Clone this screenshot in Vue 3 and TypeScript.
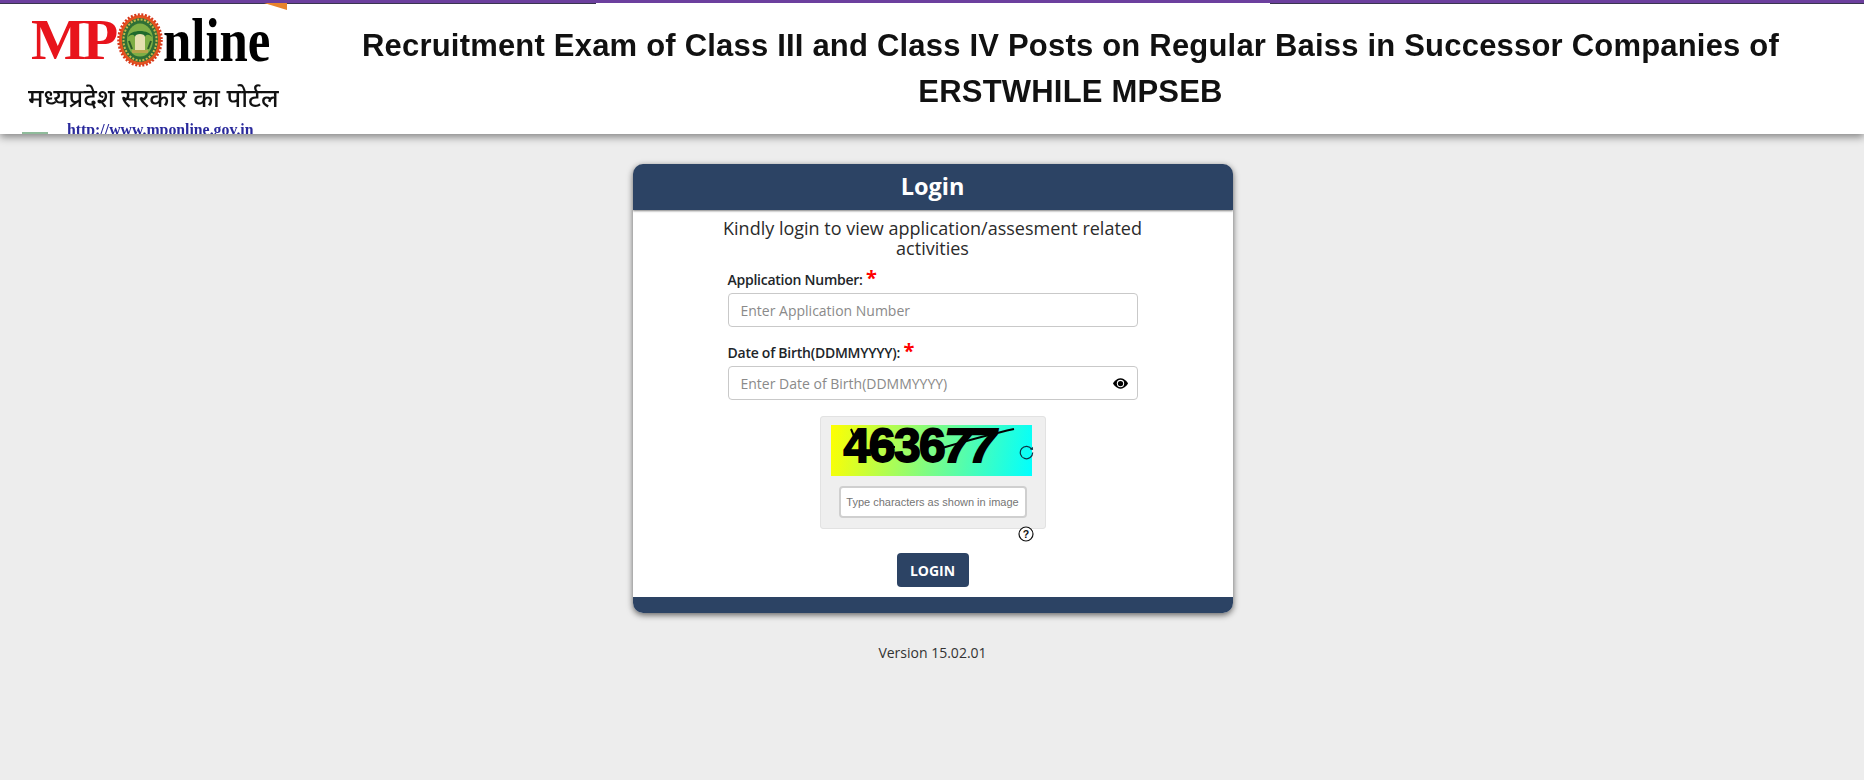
<script setup lang="ts">
const title = 'Recruitment Exam of Class III and Class IV Posts on Regular Baiss in Successor Companies of ERSTWHILE MPSEB'
const version = 'Version 15.02.01'
</script>

<template>
  <div class="page">
    <header class="top">
      <div class="logo">
        <span class="tri"></span>
        <span class="green"></span>
        <div class="brand">
          <span class="mp">MP</span>
          <svg class="emblem" viewBox="0 0 46 54" width="46" height="54">
            <ellipse cx="23" cy="27" rx="21" ry="25" fill="#e2531f" />
            <ellipse cx="23" cy="27" rx="21.5" ry="25.5" fill="none" stroke="#d8381a" stroke-width="2.5" stroke-dasharray="2 1.6" />
            <ellipse cx="23" cy="27" rx="18" ry="22" fill="#2f6f35" />
            <ellipse cx="23" cy="27" rx="16.5" ry="20.5" fill="none" stroke="#c9b64a" stroke-width="2" stroke-dasharray="2 1.5" />
            <ellipse cx="23" cy="27" rx="13" ry="16.5" fill="#7fae45" />
            <path d="M11 24c2-8 22-8 24 0-3-3-6-3-7 0H18c-1-3-4-3-7 0z" fill="#1f6a2c" />
            <path d="M18 24c0-4 10-4 10 0v14H18z" fill="#e6dfb0" />
            <rect x="15" y="37" width="16" height="3" fill="#b9a44a" />
            <path d="M12 28l3 8M34 28l-3 8" stroke="#2a5a28" stroke-width="2" fill="none" />
          </svg>
          <span class="nline">nline</span>
        </div>
        <div class="hindi">मध्यप्रदेश सरकार का पोर्टल</div>
        <div class="url">http://www.mponline.gov.in</div>
      </div>
      <h1 class="title">{{ title }}</h1>
    </header>

    <main class="main">
      <section class="card">
        <div class="card-head">Login</div>
        <div class="card-body">
          <p class="intro">Kindly login to view application/assesment related activities</p>
          <div class="field">
            <label class="label">Application Number: <span class="req">*</span></label>
            <div class="input"><span class="ph">Enter Application Number</span></div>
          </div>
          <div class="field">
            <label class="label">Date of Birth(DDMMYYYY): <span class="req">*</span></label>
            <div class="input">
              <span class="ph">Enter Date of Birth(DDMMYYYY)</span>
              <svg class="eye" viewBox="0 0 16 16" width="15" height="15">
                <path d="M16 8s-3-5.5-8-5.5S0 8 0 8s3 5.5 8 5.5S16 8 16 8z" fill="#000" />
                <circle cx="8" cy="8" r="3.9" fill="#fff" />
                <circle cx="8" cy="8" r="2.8" fill="#000" />
              </svg>
            </div>
          </div>
          <div class="captcha-wrap">
            <div class="captcha">
              <div class="cap-row">
                <div class="cap-img">
                  <span class="cap-text">4636<i class="cap-slant">77</i></span>
                  <svg class="cap-noise" viewBox="0 0 201 51" width="201" height="51">
                    <path d="M20 4l5 12M42 22h22M111 23C135 16 160 9 183 4" stroke="#000" stroke-width="2" fill="none" />
                  </svg>
                </div>
                <svg class="refresh" viewBox="0 0 16 16" width="15" height="15">
                  <path d="M13.6 4.6A6.6 6.6 0 1 0 14.6 8" fill="none" stroke="#0c3344" stroke-width="1.3" />
                  <path d="M11.6 4.6l3.4.6-.3-3.4z" fill="#0c3344" />
                </svg>
              </div>
              <div class="cap-input">Type characters as shown in image</div>
            </div>
            <svg class="help" viewBox="0 0 16 16" width="16" height="16">
              <circle cx="8" cy="8" r="7" fill="#fff" stroke="#111" stroke-width="1.2" />
              <text x="8" y="11.6" text-anchor="middle" font-size="10.5" font-weight="700" font-family="Liberation Sans, sans-serif" fill="#111">?</text>
            </svg>
          </div>
          <button class="btn" type="button">LOGIN</button>
        </div>
        <div class="card-foot"></div>
      </section>
      <p class="version">{{ version }}</p>
    </main>
  </div>
</template>

<style>
html, body { margin: 0; background: #ededed; }
</style>

<style scoped>
.page {
  min-height: 780px;
  background: #ededed;
  font-family: "Open Sans", "Noto Sans", sans-serif;
  color: #212529;
  display: flex;
  flex-direction: column;
}
.top {
  height: 134px;
  box-sizing: border-box;
  background:
    linear-gradient(#3a3550, #3a3550) left top / 596px 1px no-repeat,
    linear-gradient(#3a3550, #3a3550) right top / 594px 1px no-repeat,
    #fff;
  border-top: 3px solid #6c3f9e;
  box-shadow: 0 3px 8px rgba(0, 0, 0, .45);
  display: flex;
  overflow: hidden;
  flex-shrink: 0;
}
.logo {
  width: 345px;
  flex-shrink: 0;
  position: relative;
  padding: 8px 0 0 31px;
  box-sizing: border-box;
  filter: blur(.35px);
}
.tri {
  position: absolute;
  top: 0;
  left: 264px;
  width: 23px;
  height: 7px;
  background: #e8842c;
  clip-path: polygon(0 0, 100% 0, 100% 100%);
}
.green {
  position: absolute;
  left: 22px;
  bottom: 0;
  width: 26px;
  height: 2px;
  background: #8fbb9a;
}
.brand {
  display: flex;
  align-items: center;
  height: 58px;
}
.mp {
  font: 700 58px/58px "Liberation Serif", serif;
  color: #e8141c;
  letter-spacing: -3px;
}
.emblem { margin-left: 2px; flex-shrink: 0; }
.nline {
  display: inline-block;
  width: 106px;
  font: 700 62px/58px "Liberation Serif", serif;
  color: #000;
  transform: scaleX(.82);
  transform-origin: left center;
  margin-left: 0;
}
.hindi {
  margin: 16px 0 0 -3px;
  font: 500 25.3px/32px "Noto Sans Devanagari", "Lohit Devanagari", "Noto Sans", "Liberation Serif", serif;
  color: #111;
  white-space: nowrap;
}
.url {
  margin: 5px 0 0 36px;
  font: 700 15.8px/16px "Liberation Serif", serif;
  color: #2a2a9c;
  white-space: nowrap;
}
.title {
  flex: 1;
  margin: 0;
  padding: 20px 78px 0 10px;
  box-sizing: border-box;
  font: 700 31px/46px "Liberation Sans", Arial, sans-serif;
  letter-spacing: .2px;
  color: #111;
  text-align: center;
  filter: blur(.35px);
}
.main {
  display: flex;
  flex-direction: column;
  align-items: center;
  padding: 30px 0 0 1px;
}
.card {
  width: 600px;
  background: #fff;
  border-radius: 10px;
  box-shadow: 0 2px 6px rgba(0, 0, 0, .6);
  overflow: hidden;
  display: flex;
  flex-direction: column;
}
.card-head {
  height: 46px;
  background: #2c4364;
  color: #fff;
  font-size: 23.5px;
  font-weight: 700;
  line-height: 45px;
  text-align: center;
  box-shadow: 0 1px 2px rgba(0, 0, 0, .5);
}
.card-body {
  display: flex;
  flex-direction: column;
  align-items: center;
  padding-top: 8px;
  height: 387px;
  box-sizing: border-box;
}
.intro {
  margin: 0;
  width: 430px;
  font-size: 18px;
  line-height: 20px;
  text-align: center;
  color: #2b2b2b;
}
.field {
  width: 410px;
  margin-top: 9px;
  display: flex;
  flex-direction: column;
}
.field + .field { margin-top: 13px; }
.label {
  font-size: 14px;
  font-weight: 600;
  line-height: 26px;
  height: 26px;
  letter-spacing: -.25px;
  color: #212529;
}
.req {
  color: #f00;
  font-size: 20px;
  font-weight: 700;
  line-height: 14px;
}
.input {
  height: 34px;
  box-sizing: border-box;
  border: 1px solid #c9c9c9;
  border-radius: 4px;
  padding: 0 12px;
  display: flex;
  align-items: center;
  justify-content: space-between;
  background: #fff;
}
.ph {
  font-size: 14px;
  color: #8a8a8a;
}
.eye { margin-right: -3px; }
.captcha-wrap {
  margin-top: 16px;
  width: 226px;
  display: flex;
  flex-direction: column;
  align-items: flex-end;
}
.captcha {
  width: 226px;
  height: 113px;
  box-sizing: border-box;
  background: #efefef;
  border: 1px solid #e2e2e2;
  border-radius: 3px;
  padding: 8px 0 0 10px;
}
.cap-row {
  display: flex;
  align-items: center;
}
.cap-img {
  position: relative;
  width: 201px;
  height: 51px;
  flex-shrink: 0;
  background: linear-gradient(100deg, #ffff00 0%, #7dfc85 50%, #00ffff 100%);
}
.cap-text {
  display: block;
  padding-left: 13px;
  height: 51px;
  font: 700 48px/41px "Liberation Sans", sans-serif;
  letter-spacing: -1.5px;
  color: #000;
  -webkit-text-stroke: 1.8px #000;
  white-space: nowrap;
}
.cap-slant {
  font-style: italic;
}
.cap-noise {
  position: absolute;
  inset: 0;
}
.refresh {
  margin-left: -13px;
  margin-top: 4px;
  position: relative;
  flex-shrink: 0;
}
.cap-input {
  width: 188px;
  height: 32px;
  margin: 10px 0 0 8px;
  box-sizing: border-box;
  background: #fff;
  border: 2px solid #cfcfcf;
  border-radius: 4px;
  font: 400 11px/28px "Liberation Sans", Arial, sans-serif;
  color: #757575;
  text-align: center;
  white-space: nowrap;
}
.help { margin: -3px 12px 0 0; display: block; }
.btn {
  margin-top: 11px;
  width: 72px;
  height: 34px;
  padding: 0;
  background: #2c4364;
  border: 0;
  border-radius: 4px;
  color: #fff;
  font-family: inherit;
  font-size: 14px;
  font-weight: 700;
}
.card-foot {
  height: 16px;
  background: #2c4364;
}
.version {
  margin: 30px 0 0;
  font-size: 14px;
  line-height: 20px;
  color: #333;
}
</style>
